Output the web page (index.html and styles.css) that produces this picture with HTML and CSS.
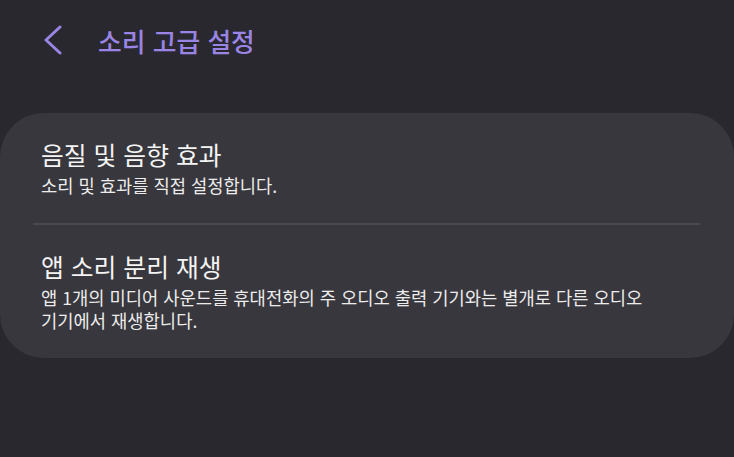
FILE: index.html
```html
<!DOCTYPE html>
<html lang="ko">
<head>
    <meta charset="UTF-8">
    <meta name="viewport" content="width=device-width, initial-scale=1.0">
    <title>소리 고급 설정</title>
    <link rel="stylesheet" href="styles.css">
</head>
<body>
    <div class="header">
        <button class="back" aria-label="뒤로">
            <svg width="20" height="30" viewBox="0 0 20 30">
                <path d="M17 2 L3 15 L17 28" fill="none" stroke="#9a84e4" stroke-width="3" stroke-linecap="round" stroke-linejoin="round"/>
            </svg>
        </button>
        <h1>소리 고급 설정</h1>
    </div>

    <div class="card">
        <div class="item">
            <div class="item-title">음질 및 음향 효과</div>
            <div class="item-desc">소리 및 효과를 직접 설정합니다.</div>
        </div>
        <div class="divider"></div>
        <div class="item">
            <div class="item-title">앱 소리 분리 재생</div>
            <div class="item-desc">앱 1개의 미디어 사운드를 휴대전화의 주 오디오 출력 기기와는 별개로 다른 오디오 기기에서 재생합니다.</div>
        </div>
    </div>
</body>
</html>
```

FILE: styles.css
```css
body {
    font-family: "Noto Sans CJK KR", "Noto Sans", sans-serif;
    background-color: #29282e;
    color: #f4f4f4;
    margin: 0;
    padding: 0;
    height: 457px;
    overflow: hidden;
    word-break: keep-all;
}

.header {
    display: flex;
    align-items: center;
    height: 80px;
    padding-left: 43px;
}

.back {
    background: none;
    border: none;
    padding: 0;
    margin: 0;
    width: 20px;
    height: 30px;
    display: flex;
    cursor: pointer;
}

.header h1 {
    margin: 0 0 0 35px;
    font-size: 25.8px;
    font-weight: 500;
    color: #9a84e4;
}

.card {
    margin-top: 33px;
    background-color: #38373d;
    border-radius: 44px;
    padding: 0 34px 0 33px;
}

.item {
    padding: 23px 8px 26px;
}

.item-title {
    font-size: 24.8px;
    line-height: 36px;
}

.item-desc {
    margin-top: 2px;
    font-size: 17.7px;
    line-height: 23px;
    color: #ececec;
}

.divider {
    height: 2px;
    background-color: #4a494f;
}
```
